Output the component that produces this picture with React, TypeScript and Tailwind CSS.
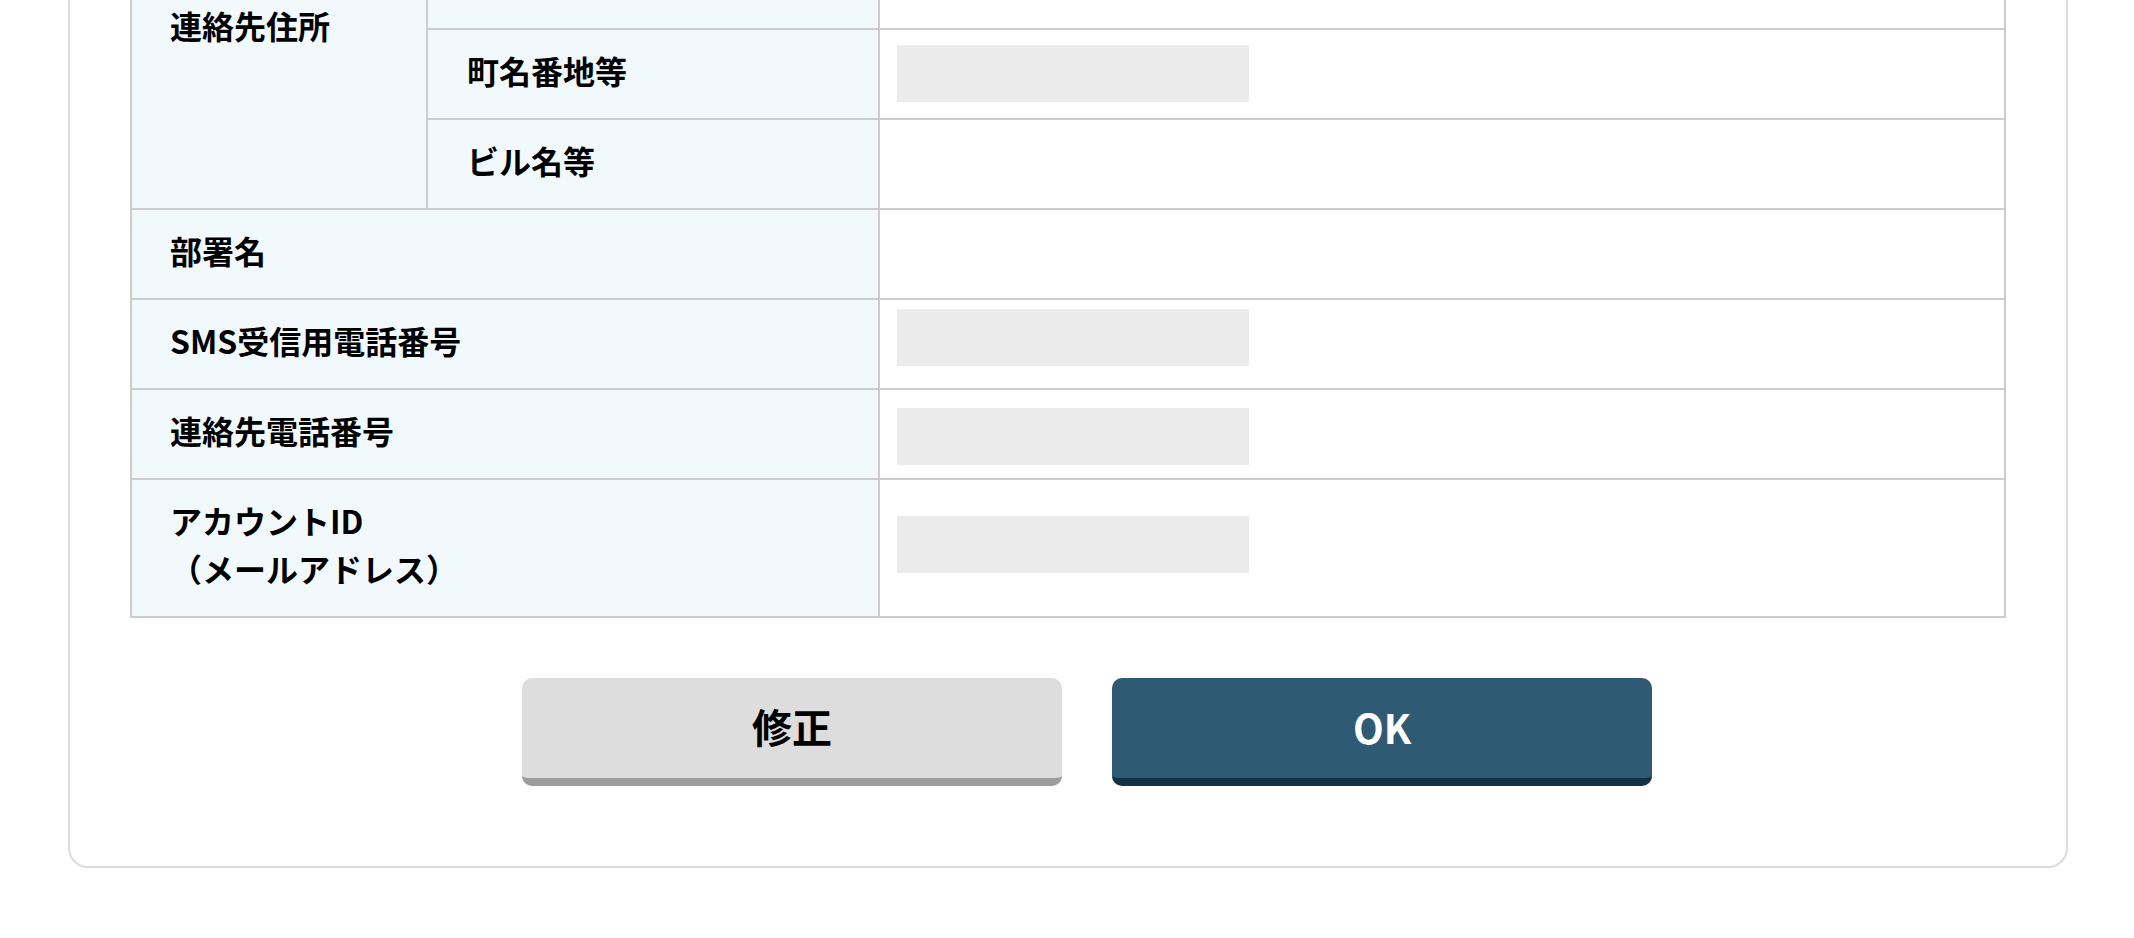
import React from "react";

function Box({ className }: { className: string }) {
  return <div className={"h-[57px] w-[352px] bg-[#ebebeb] " + className} />;
}

export default function App() {
  return (
    <div className="min-h-screen bg-white font-['Noto_Sans_CJK_JP','Noto_Sans',sans-serif] text-black">
      <div className="ml-[68px] w-[2000px] rounded-b-[20px] border-x-2 border-b-2 border-[#dcdcdc] px-[60px] pb-[80px]">
        <div className="border-x-2 border-b-2 border-[#cccccc] text-[32px] font-bold leading-[48px]">
          {/* address group */}
          <div className="flex border-b-2 border-[#cccccc]">
            <div className="w-[296px] shrink-0 border-r-2 border-[#cccccc] bg-[#f2f9fd] pl-[38px] pt-[1px]">
              連絡先住所
            </div>
            <div className="flex-1">
              <div className="flex h-[30px] border-b-2 border-[#cccccc]">
                <div className="w-[452px] shrink-0 border-r-2 border-[#cccccc] bg-[#f2f9fd]" />
                <div className="flex-1 bg-white" />
              </div>
              <div className="flex h-[90px] border-b-2 border-[#cccccc]">
                <div className="flex w-[452px] shrink-0 items-center border-r-2 border-[#cccccc] bg-[#f2f9fd] pb-[9px] pl-[39px]">
                  町名番地等
                </div>
                <div className="flex-1 bg-white pl-[17px] pt-[15px]">
                  <Box className="" />
                </div>
              </div>
              <div className="flex h-[88px]">
                <div className="flex w-[452px] shrink-0 items-center border-r-2 border-[#cccccc] bg-[#f2f9fd] pb-[9px] pl-[39px]">
                  ビル名等
                </div>
                <div className="flex-1 bg-white" />
              </div>
            </div>
          </div>

          <div className="flex h-[90px] border-b-2 border-[#cccccc]">
            <div className="flex w-[748px] shrink-0 items-center border-r-2 border-[#cccccc] bg-[#f2f9fd] pb-[9px] pl-[38px]">
              部署名
            </div>
            <div className="flex-1 bg-white" />
          </div>

          <div className="flex h-[90px] border-b-2 border-[#cccccc]">
            <div className="flex w-[748px] shrink-0 items-center border-r-2 border-[#cccccc] bg-[#f2f9fd] pb-[9px] pl-[38px]">
              SMS受信用電話番号
            </div>
            <div className="flex-1 bg-white pl-[17px] pt-[9px]">
              <Box className="" />
            </div>
          </div>

          <div className="flex h-[90px] border-b-2 border-[#cccccc]">
            <div className="flex w-[748px] shrink-0 items-center border-r-2 border-[#cccccc] bg-[#f2f9fd] pb-[9px] pl-[38px]">
              連絡先電話番号
            </div>
            <div className="flex-1 bg-white pl-[17px] pt-[18px]">
              <Box className="" />
            </div>
          </div>

          <div className="flex h-[136px]">
            <div className="flex w-[748px] shrink-0 flex-col justify-center border-r-2 border-[#cccccc] bg-[#f2f9fd] pb-[9px] pl-[38px]">
              <span>アカウントID</span>
              <span>（メールアドレス）</span>
            </div>
            <div className="flex-1 bg-white pl-[17px] pt-[36px]">
              <Box className="" />
            </div>
          </div>
        </div>

        <div className="mt-[60px] flex justify-center gap-[50px] pl-[38px]">
          <button className="flex h-[108px] w-[540px] items-center justify-center rounded-[10px] border-b-[8px] border-[#9c9c9c] bg-[#dddddd] pb-[4px] text-[40px] font-bold text-black">
            修正
          </button>
          <button className="flex h-[108px] w-[540px] items-center justify-center rounded-[10px] border-b-[8px] border-[#133246] bg-[#2f5a73] pb-[2px] text-[40px] font-bold text-white">
            OK
          </button>
        </div>
      </div>
    </div>
  );
}
